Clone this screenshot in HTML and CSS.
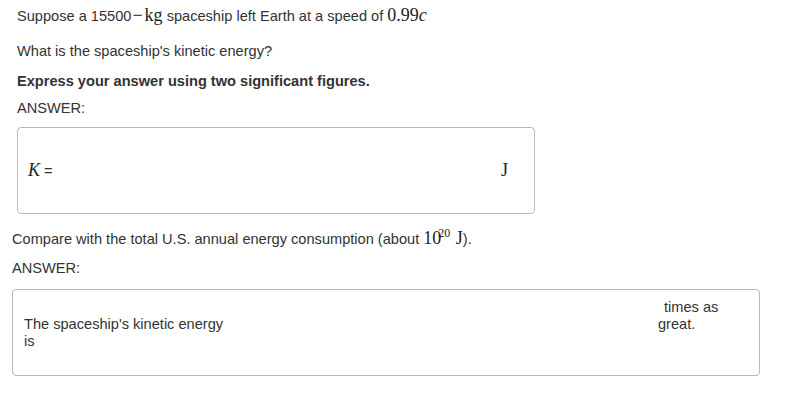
FILE: index.html
```html
<!DOCTYPE html>
<html>
<head>
<meta charset="utf-8">
<link rel="stylesheet" href="styles.css">
</head>
<body>
<main class="page">
  <section class="part part-a">
    <p class="line l1">Suppose a 15500<span class="math"><span class="op">−</span>kg</span> spaceship left Earth at a speed of <span class="math">0.99<i>c</i></span></p>
    <p class="line l2">What is the spaceship's kinetic energy?</p>
    <p class="line l3">Express your answer using two significant figures.</p>
    <p class="line l4">ANSWER:</p>
    <div class="answer-box box-a">
      <span class="label"><span class="math"><i>K</i></span> =</span>
      <span class="math unit">J</span>
    </div>
  </section>
  <section class="part part-b">
    <p class="line l5">Compare with the total U.S. annual energy consumption (about <span class="math">10<sup class="exp">20</sup> J</span>).</p>
    <p class="line l6">ANSWER:</p>
    <div class="answer-box box-b">
      <div class="lead">The spaceship's kinetic energy is</div>
      <div class="trail">times as great.</div>
    </div>
  </section>
</main>
</body>
</html>
```

FILE: styles.css
```css
html, body {
  margin: 0;
  padding: 0;
  background: #ffffff;
}
body {
  font-family: "Liberation Sans", Arial, sans-serif;
  font-size: 14.6px;
  color: #333333;
}
.page {
  display: flex;
  flex-direction: column;
  width: 807px;
}
.part {
  display: flex;
  flex-direction: column;
}
.part-a {
  padding-left: 17px;
  width: 518px;
}
.part-b {
  padding-left: 12px;
  width: 748px;
}
.line {
  margin: 0;
  line-height: 20px;
  height: 20px;
  white-space: nowrap;
}
.l1 { margin-top: 5px; }
.l2 { margin-top: 16px; }
.l3 { margin-top: 10px; font-weight: bold; }
.l4 { margin-top: 7px; }
.l5 { margin-top: 14px; }
.l6 { margin-top: 10px; }
.math {
  font-family: "Liberation Serif", "DejaVu Serif", serif;
  font-size: 18px;
  color: #222222;
}
.math i {
  font-style: italic;
}
.op {
  margin: 0 2px 0 1px;
}
.exp {
  font-size: 12px;
  vertical-align: 0;
  position: relative;
  top: -7px;
  margin-left: -3px;
  margin-right: 1px;
}
.answer-box {
  box-sizing: border-box;
  height: 87px;
  border: 1px solid #b8b8b8;
  border-radius: 4px;
  display: flex;
}
.box-a {
  margin-top: 9px;
  align-items: center;
  justify-content: space-between;
  padding: 0 26px 0 10px;
}
.box-b {
  margin-top: 11px;
  align-items: flex-start;
  justify-content: space-between;
  padding: 9px 26px 0 11px;
  line-height: 17px;
}
.lead {
  width: 205px;
  margin-top: 17px;
}
.trail {
  width: 75px;
  text-indent: 6px;
}
```
